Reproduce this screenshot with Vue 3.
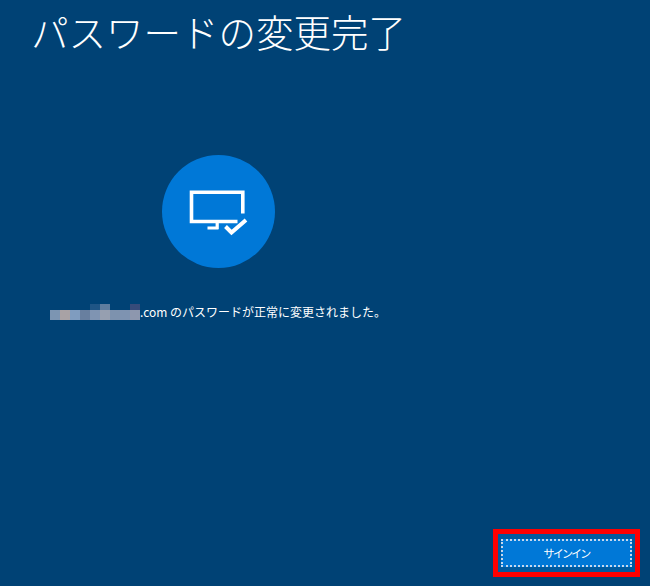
<template>
  <div class="page">
    <h1 class="title">パスワードの変更完了</h1>
    <div class="badge">
      <svg width="60" height="48" viewBox="0 0 60 48" fill="none" stroke="#fff">
        <path d="M53.800 25.500V4.200H2.500V33.500H48.500" stroke-width="3.600" />
        <path d="M28.200 33.500V41M18.500 40H29.500" stroke-width="3.200" />
        <path d="M36.500 38.500L42.500 44.500L57 32" stroke-width="4" />
      </svg>
    </div>
    <p class="message">
      <span class="mosaic">
        <i v-for="(block, index) in blocks" :key="index" :style="blockStyle(block)"></i>
      </span>.com のパスワードが正常に変更されました。
    </p>
    <div class="actions">
      <div class="highlight">
        <button class="signin" type="button">
          <span class="focus">サインイン</span>
        </button>
      </div>
    </div>
  </div>
</template>

<script setup>
// モザイク部分 (col, row, 色)
const blocks = [
  { col: 5, row: 1, c: '#1f5585' },
  { col: 6, row: 1, c: '#5f7d9f' },
  { col: 9, row: 1, c: '#364b7a' },
  { col: 1, row: 2, c: '#7c95b2' },
  { col: 2, row: 2, c: '#a8a2a5' },
  { col: 3, row: 2, c: '#7f9cbf' },
  { col: 4, row: 2, c: '#687f9f' },
  { col: 5, row: 2, c: '#7f94b2' },
  { col: 6, row: 2, c: '#969fb0' },
  { col: 7, row: 2, c: '#7d92ae' },
  { col: 8, row: 2, c: '#7e93b1' },
  { col: 9, row: 2, c: '#8d97ae' }
]

function blockStyle(block) {
  return { gridColumn: block.col, gridRow: block.row, background: block.c }
}
</script>

<style>
html,
body {
  margin: 0;
  background: #004275;
}
</style>

<style scoped>
.page {
  box-sizing: border-box;
  width: 650px;
  height: 586px;
  display: flex;
  flex-direction: column;
  background: #004275;
  color: #fff;
  font-family: "Noto Sans CJK JP", "Liberation Sans", sans-serif;
  padding: 0 10px 9px 31px;
}

.title {
  margin: 6px 0 0;
  font-size: 37.500px;
  line-height: 50px;
  font-weight: 300;
  white-space: nowrap;
}

.badge {
  width: 113px;
  height: 113px;
  margin: 99px 0 0 131px;
  border-radius: 50%;
  background: #0078d7;
  display: flex;
  align-items: center;
  justify-content: center;
}

.message {
  margin: 35px 0 0 19px;
  display: flex;
  align-items: flex-end;
  font-size: 12px;
  line-height: 18px;
  white-space: pre;
}

.mosaic {
  display: grid;
  grid-template-columns: repeat(9, 10px);
  grid-template-rows: 6px 10px;
  margin-bottom: 1px;
}

.actions {
  margin-top: auto;
  display: flex;
  justify-content: flex-end;
}

.highlight {
  border: 5px solid #f00;
}

.signin {
  display: block;
  width: 137px;
  height: 38px;
  box-sizing: border-box;
  padding: 0;
  border-style: solid;
  border-color: #005a9e;
  border-width: 5px 3px;
  background: #0078d7;
  color: #fff;
  font: 11px "Noto Sans CJK JP", sans-serif;
}

.focus {
  box-sizing: border-box;
  height: 100%;
  display: flex;
  align-items: center;
  justify-content: center;
  border: 2px dotted #c5d8ee;
  letter-spacing: -1.800px;
}
</style>
